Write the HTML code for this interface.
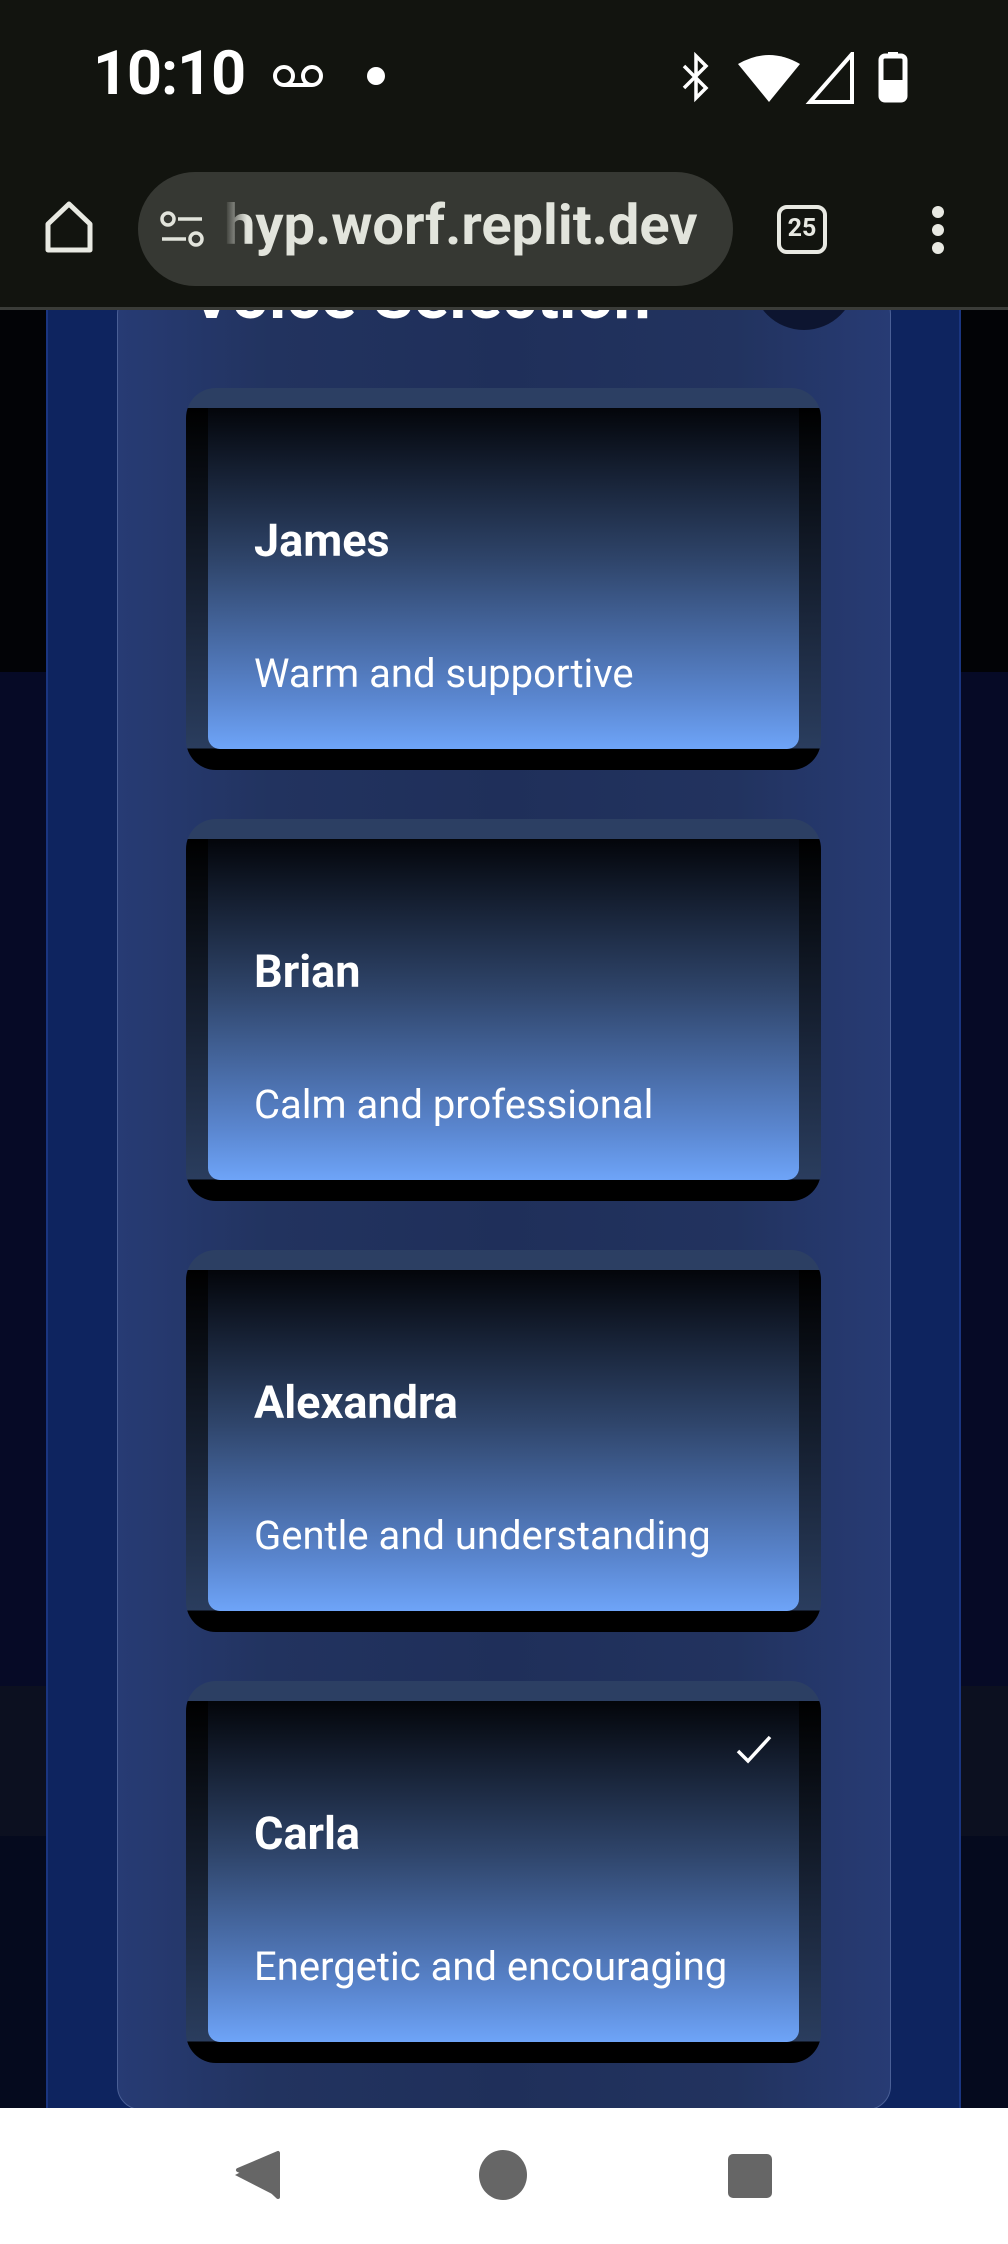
<!DOCTYPE html>
<html><head><meta charset="utf-8"><style>
*{margin:0;padding:0;box-sizing:border-box}
body{width:1008px;height:2244px;overflow:hidden;position:relative;background:#050a1e;font-family:"Roboto","Liberation Sans",sans-serif}
.abs{position:absolute}
.card{position:absolute;left:186px;width:635px;height:382px;border-radius:30px;background:linear-gradient(#2c3f63 0,#2c3f63 20px,#000 20px,#2a3d5e 360px,#000 361px);}
.card .in{position:absolute;left:22px;right:22px;top:20px;height:341px;border-radius:0 0 12px 12px;background:linear-gradient(#03050a,#2f456b 45%,#5a86cf 85%,#6ea4f8);}
.card .n{position:absolute;left:68px;top:126px;color:#fff;font-weight:bold;font-size:45px}
.card .d{position:absolute;left:68px;top:262px;color:#fff;font-size:40px}
</style></head><body>
<div class="abs" style="left:0;top:310px;width:1008px;height:362px;background:#020306"></div>
<div class="abs" style="left:0;top:672px;width:1008px;height:1014px;background:#060a26"></div>
<div class="abs" style="left:0;top:1686px;width:1008px;height:150px;background:#0c1020"></div>
<div class="abs" style="left:46px;top:310px;width:915px;height:1800px;background:#0e245f;border-left:2px solid #1a3580;border-right:2px solid #1a3580"></div>
<div class="abs" style="left:117px;top:290px;width:774px;height:1820px;background:linear-gradient(90deg,#273b74,#22335f 20%,#1f2f5a 50%,#22335f 80%,#273b74);border:1.5px solid #4a5f96;border-radius:24px"></div>
<div class="abs" style="left:190px;top:264px;color:#fff;font-weight:bold;font-size:66px;line-height:66px">Voice Selection</div>
<div class="abs" style="left:752px;top:260px;width:104px;height:70px;border-radius:0 0 52px 52px;background:#0d1530"></div>

<div class="card" style="top:388px"><div class="in"></div><div class="n">James</div><div class="d">Warm and supportive</div></div>
<div class="card" style="top:819px"><div class="in"></div><div class="n">Brian</div><div class="d">Calm and professional</div></div>
<div class="card" style="top:1250px"><div class="in"></div><div class="n">Alexandra</div><div class="d">Gentle and understanding</div></div>
<div class="card" style="top:1681px"><div class="in"></div><div class="n">Carla</div><div class="d">Energetic and encouraging</div>
<svg class="abs" style="left:548px;top:52px" width="40" height="34" viewBox="0 0 40 34"><path d="M4 18 L14 28 L36 4" fill="none" stroke="#fff" stroke-width="3.5"/></svg></div>

<div class="abs" style="left:0;top:0;width:1008px;height:310px;background:#12140f;border-bottom:3px solid #3a3c38"></div>
<div class="abs" style="left:93px;top:37px;color:#fff;font-size:61px;font-weight:bold;letter-spacing:-1px">10:10</div>
<svg class="abs" style="left:272px;top:62px" width="56" height="30"><circle cx="12" cy="14" r="9" fill="none" stroke="#fff" stroke-width="4"/><circle cx="40" cy="14" r="9" fill="none" stroke="#fff" stroke-width="4"/><line x1="12" y1="23" x2="40" y2="23" stroke="#fff" stroke-width="4"/></svg>
<div class="abs" style="left:367px;top:67px;width:18px;height:18px;border-radius:50%;background:#fff"></div>
<svg class="abs" style="left:676px;top:52px" width="240" height="52"><path d="M8 14 L30 36 L20 46 L20 4 L30 14 L8 36" fill="none" stroke="#fff" stroke-width="3.5"/><path d="M62 12 Q93 -6 124 12 L93 50 Z" fill="#fff"/><path d="M134 50 L176 2 L176 50 Z" fill="none" stroke="#fff" stroke-width="4"/><rect x="205" y="4" width="24" height="44" rx="4" fill="none" stroke="#fff" stroke-width="5"/><rect x="212" y="0" width="10" height="6" fill="#fff"/><rect x="205" y="28" width="24" height="20" fill="#fff"/></svg>
<svg class="abs" style="left:42px;top:200px" width="54" height="56"><path d="M6 24 L27 4 L48 24 L48 50 L6 50 Z" fill="none" stroke="#e8e9e2" stroke-width="5" stroke-linejoin="round"/></svg>
<div class="abs" style="left:138px;top:172px;width:595px;height:114px;border-radius:57px;background:#363833"></div>
<svg class="abs" style="left:160px;top:210px" width="46" height="40"><circle cx="8" cy="9" r="6" fill="none" stroke="#e2e4dc" stroke-width="3.5"/><line x1="18" y1="9" x2="42" y2="9" stroke="#e2e4dc" stroke-width="3.5"/><line x1="2" y1="29" x2="26" y2="29" stroke="#e2e4dc" stroke-width="3.5"/><circle cx="36" cy="29" r="6" fill="none" stroke="#e2e4dc" stroke-width="3.5"/></svg>
<div class="abs" style="left:224px;top:192px;color:#e2e4dc;font-size:56px;font-weight:bold;letter-spacing:0px">hyp.worf.replit.dev</div>
<div class="abs" style="left:225px;top:190px;width:22px;height:80px;background:linear-gradient(90deg,#363833,rgba(54,56,51,0))"></div>
<div class="abs" style="left:777px;top:205px;width:50px;height:49px;border:4.5px solid #e8e9e2;border-radius:10px;color:#e8e9e2;font-size:25px;font-weight:bold;text-align:center;line-height:40px">25</div>
<div class="abs" style="left:932px;top:206px;width:12px;height:12px;border-radius:50%;background:#e8e9e2;box-shadow:0 18px 0 #e8e9e2,0 36px 0 #e8e9e2"></div>

<div class="abs" style="left:0;top:2108px;width:1008px;height:136px;background:#fff"></div>
<svg class="abs" style="left:230px;top:2150px" width="560" height="50"><path d="M48 3 L48 47 L30 30 L8 20 Z" fill="#666" stroke="#666" stroke-width="4" stroke-linejoin="round"/><path d="M48 3 L5 25 L48 47 Z" fill="#666"/><ellipse cx="273" cy="25" rx="24" ry="25" fill="#666"/><rect x="498" y="4" width="44" height="44" rx="5" fill="#666"/></svg>
</body></html>
